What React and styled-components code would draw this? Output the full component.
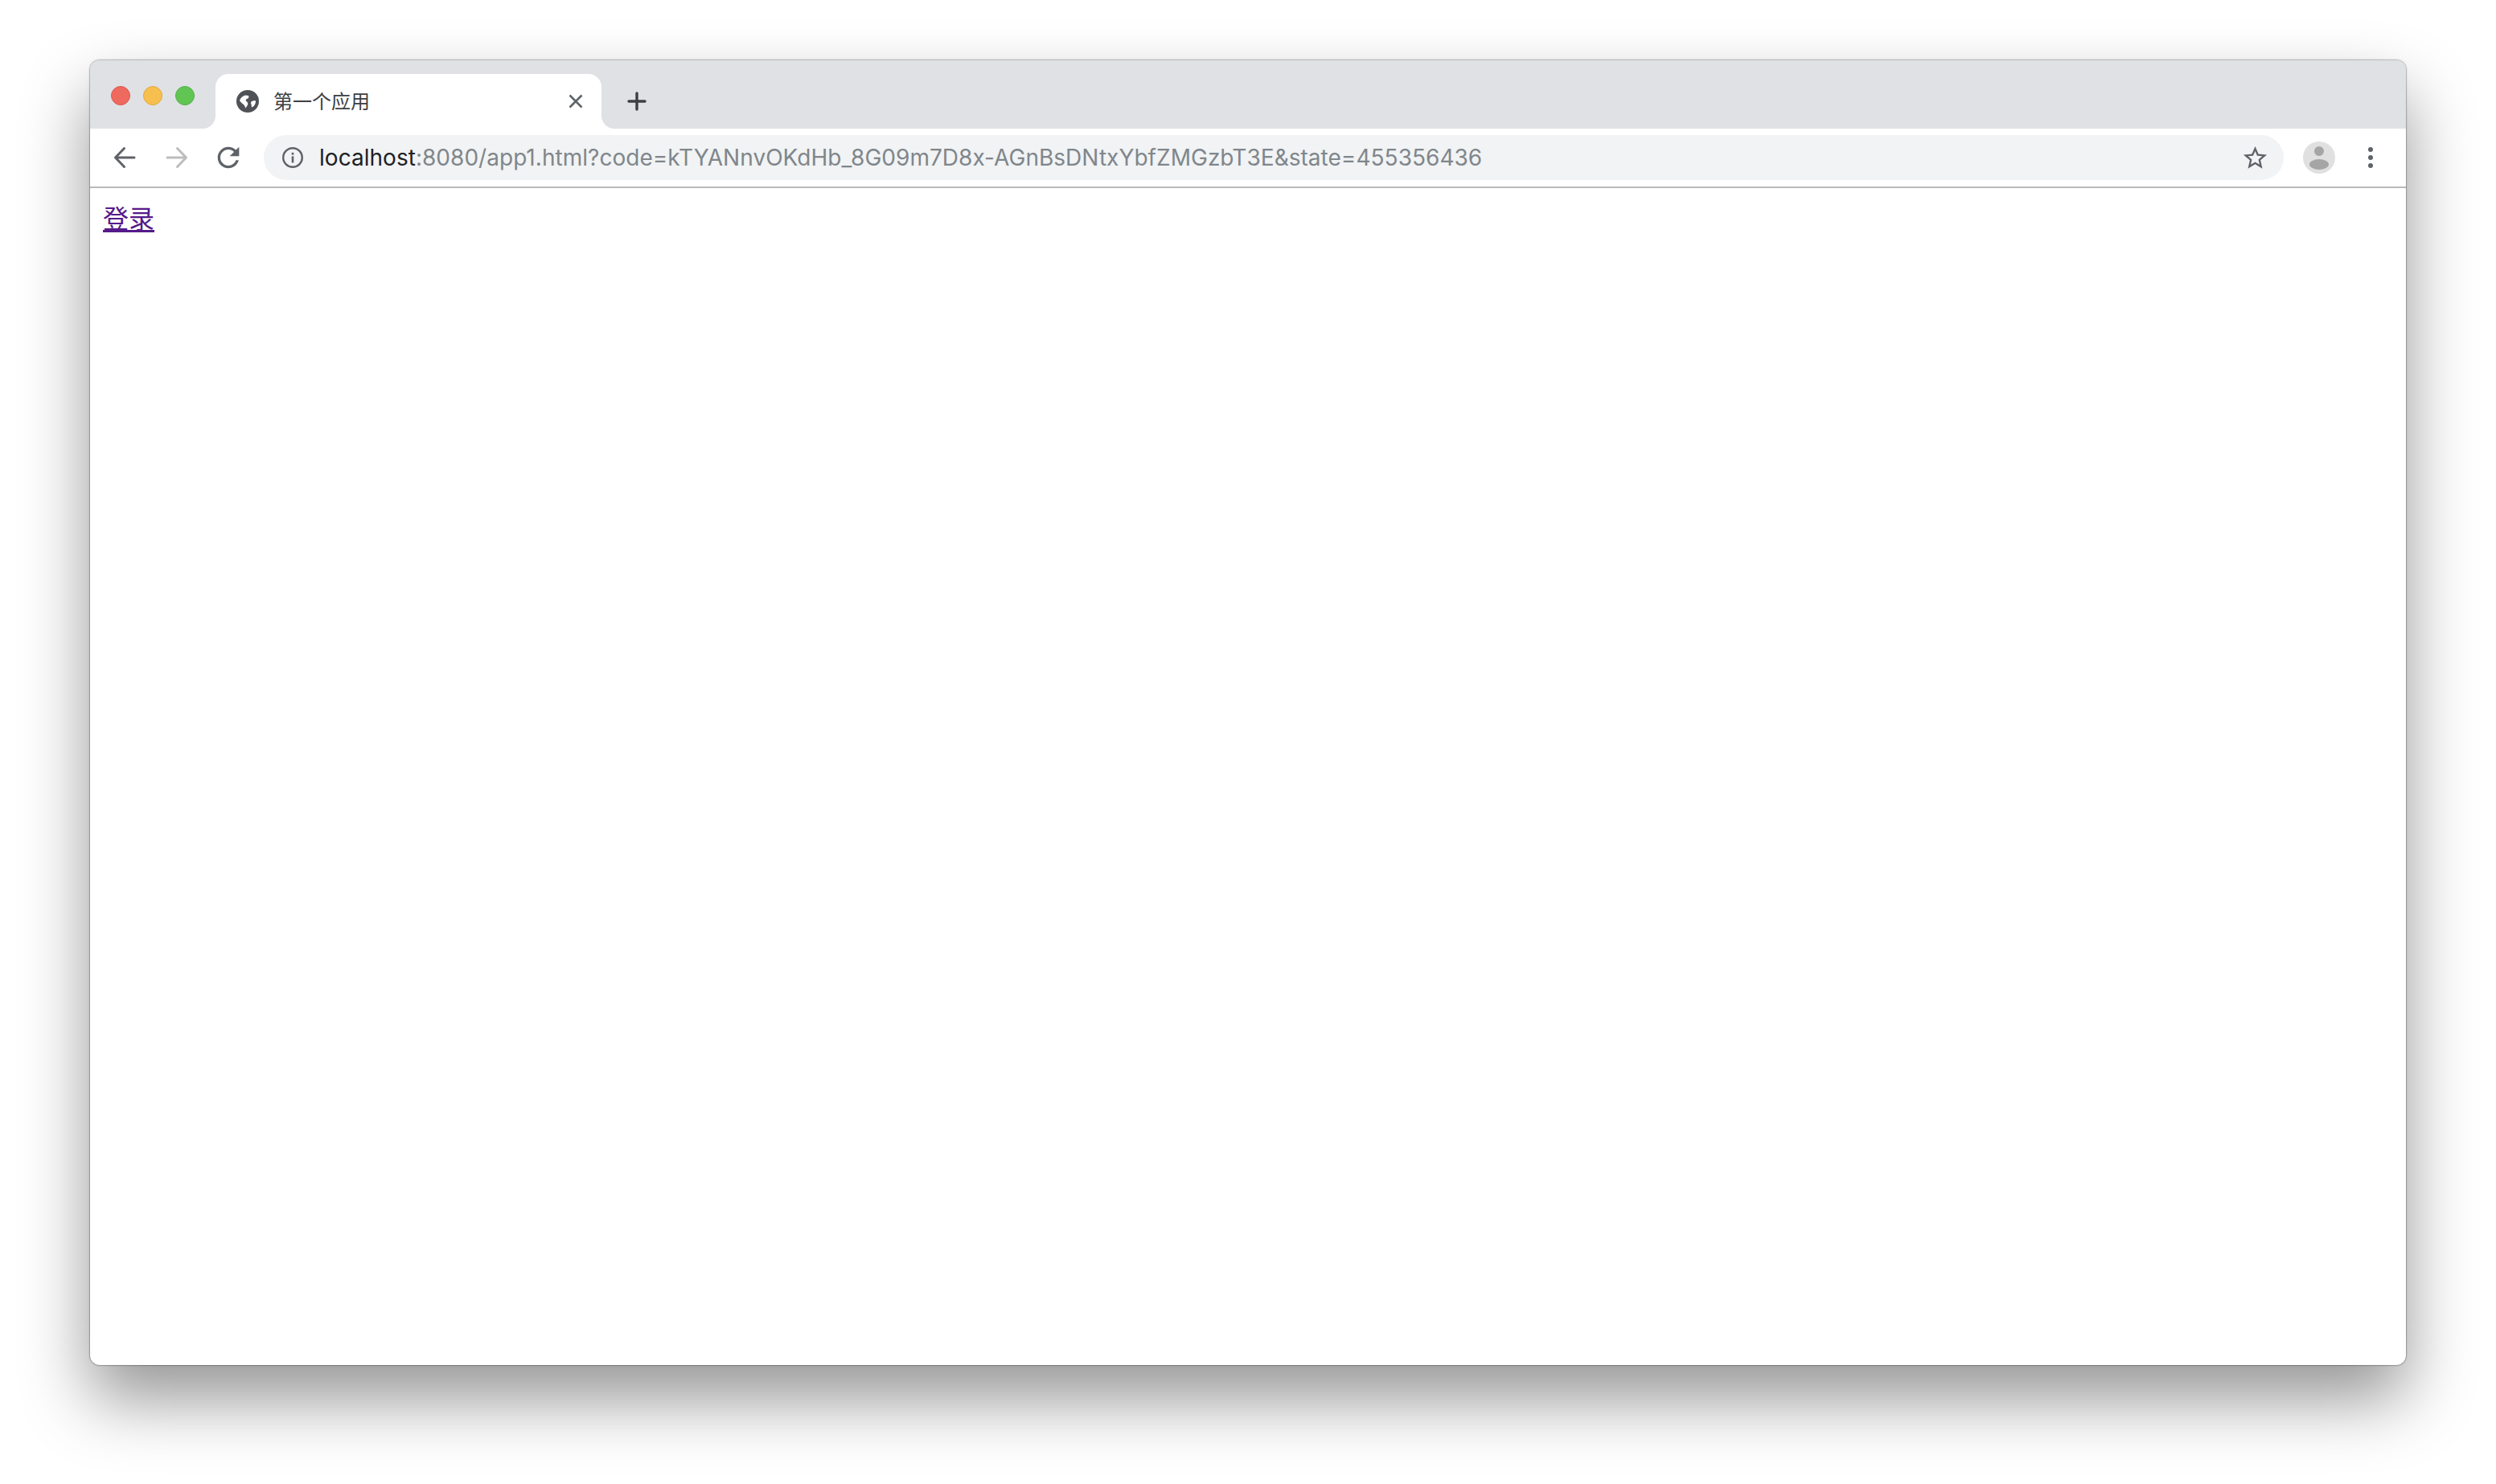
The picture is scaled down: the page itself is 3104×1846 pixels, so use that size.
import React from 'react';
import styled, { createGlobalStyle } from 'styled-components';

const GlobalStyle = createGlobalStyle`
    html, body {
        margin: 0;
        background: #fff;
    }
    body {
        font-family: Inter, "Noto Sans CJK SC", sans-serif;
    }
`;

const Page = styled.div`
    width: 3104px;
    height: 1846px;
    box-sizing: border-box;
    padding: 75px 112px 148px 112px;
    overflow: hidden;
`;

const Window = styled.div`
    height: 100%;
    display: flex;
    flex-direction: column;
    background: #fff;
    border-radius: 12px;
    box-shadow: 0 0 0 1px rgba(0,0,0,0.14), 0 0 3px rgba(0,0,0,0.3), 0 42px 84px rgba(0,0,0,0.42);
`;

const TitleBar = styled.div`
    height: 85px;
    box-sizing: border-box;
    flex-shrink: 0;
    display: flex;
    align-items: flex-end;
    padding-left: 26px;
    background: #dfe1e5;
    border-radius: 12px 12px 0 0;
`;

const Lights = styled.div`
    display: flex;
    gap: 16px;
    align-self: flex-start;
    margin-top: 32px;
`;

const Light = styled.span`
    width: 24px;
    height: 24px;
    box-sizing: border-box;
    border-radius: 50%;
    background: ${props => props.color};
    border: 1px solid ${props => props.edge};
`;

const Tab = styled.div`
    position: relative;
    width: 480px;
    height: 68px;
    box-sizing: border-box;
    margin-left: 26px;
    padding: 0 22px 0 26px;
    display: flex;
    align-items: center;
    background: #fff;
    border-radius: 16px 16px 0 0;

    &::before, &::after {
        content: '';
        position: absolute;
        bottom: 0;
        width: 16px;
        height: 16px;
    }
    &::before {
        left: -16px;
        background: radial-gradient(circle at 0 0, #dfe1e5 15.5px, #fff 16.5px);
    }
    &::after {
        right: -16px;
        background: radial-gradient(circle at 100% 0, #dfe1e5 15.5px, #fff 16.5px);
    }
`;

const TabTitle = styled.span`
    flex: 1;
    margin-left: 18px;
    padding-bottom: 3px;
    font-family: "Noto Sans CJK SC", sans-serif;
    font-size: 24px;
    line-height: 32px;
    color: #3c4043;
`;

const NewTab = styled.div`
    margin: 0 0 22px 32px;
    width: 24px;
    height: 24px;
    display: flex;
`;

const Toolbar = styled.div`
    height: 74px;
    box-sizing: border-box;
    flex-shrink: 0;
    display: flex;
    align-items: center;
    padding: 0 12px 0 11px;
    background: #fff;
    border-bottom: 2px solid #b9b9b9;
`;

const ToolButton = styled.div`
    width: ${props => props.wide || 64}px;
    height: 48px;
    flex-shrink: 0;
    display: flex;
    align-items: center;
    justify-content: center;
`;

const AddressBar = styled.div`
    flex: 1;
    height: 56px;
    margin: 0 12px;
    padding: 0 18px 0 22px;
    display: flex;
    align-items: center;
    background: #f1f3f4;
    border-radius: 28px;
`;

const Url = styled.div`
    flex: 1;
    margin-left: 19px;
    font-size: 28px;
    line-height: 36px;
    letter-spacing: 0.03px;
    color: #80868b;
    white-space: nowrap;
`;

const Host = styled.span`
    color: #202124;
`;

const Content = styled.div`
    flex: 1;
    padding: 18px 16px 16px;
`;

const LoginLink = styled.a`
    font-family: "Noto Sans CJK SC", sans-serif;
    font-size: 32px;
    line-height: 37px;
    color: #551a8b;
    text-decoration: underline;
    text-decoration-thickness: 3px;
`;

const GlobeIcon = () => (
    <svg width="28" height="28" viewBox="0 0 28 28" style={{ flexShrink: 0 }}>
        <circle cx="14" cy="14" r="14" fill="#4f5257" />
        <path fill="#fff" d="M4 13C5 10 7.5 7.5 11 6.5L15 7C16 8.5 15 10.5 13 11 11.5 11.5 11 13 13 14.5 15 16 14.5 18.5 13 20L11.5 22.5C11 21 10 19.5 9 18 7.5 17 5.5 15.5 4 13Z" />
        <path fill="#fff" d="M18.5 14.5C20 13.5 22.5 13 24 13.5 24 17 22.5 20 19.5 21.5 18.5 20.5 18.5 19.5 18.8 18.5 18.2 17 17.5 15.5 18.5 14.5Z" />
    </svg>
);

const CloseIcon = () => (
    <svg width="20" height="20" viewBox="0 0 20 20" stroke="#5f6368" strokeWidth="2.6">
        <path d="M2.5 2.5 17.5 17.5M17.5 2.5 2.5 17.5" />
    </svg>
);

const PlusIcon = () => (
    <svg width="24" height="24" viewBox="0 0 24 24" stroke="#3c4043" strokeWidth="3.4" strokeLinecap="round">
        <path d="M12 2v20M2 12h20" />
    </svg>
);

const ArrowIcon = ({ color, flip }) => (
    <svg width="30" height="30" viewBox="0 0 30 30" fill="none" stroke={color} strokeWidth="3" strokeLinecap="round" strokeLinejoin="round" style={{ transform: flip ? 'scaleX(-1)' : 'none' }}>
        <path d="M27 15H3.5M14.5 3.5 3.5 15l11 11.5" />
    </svg>
);

const ReloadIcon = () => (
    <svg width="40" height="40" viewBox="0 0 24 24" fill="#5f6368">
        <path d="M17.65 6.35C16.2 4.9 14.21 4 12 4c-4.42 0-7.99 3.58-7.99 8s3.57 8 7.99 8c3.73 0 6.84-2.55 7.73-6h-2.08c-.82 2.33-3.04 4-5.65 4-3.31 0-6-2.69-6-6s2.69-6 6-6c1.66 0 3.14.69 4.22 1.78L13 11h7V4l-2.35 2.35z" />
    </svg>
);

const InfoIcon = () => (
    <svg width="28" height="28" viewBox="0 0 28 28" fill="none" style={{ flexShrink: 0 }}>
        <circle cx="14" cy="14" r="11.8" stroke="#5f6368" strokeWidth="2.4" />
        <rect x="12.7" y="12.4" width="2.6" height="8" fill="#5f6368" />
        <rect x="12.7" y="7.8" width="2.6" height="2.8" fill="#5f6368" />
    </svg>
);

const StarIcon = () => (
    <svg width="35" height="35" viewBox="0 0 24 24" fill="#5f6368" style={{ flexShrink: 0 }}>
        <path d="M22 9.24l-7.19-.62L12 2 9.19 8.63 2 9.24l5.46 4.73L5.82 21 12 17.27 18.18 21l-1.63-7.03L22 9.24zM12 15.4l-3.76 2.27 1-4.28-3.32-2.88 4.38-.38L12 6.1l1.71 4.04 4.38.38-3.32 2.88 1 4.28L12 15.4z" />
    </svg>
);

const AvatarIcon = () => (
    <svg width="40" height="40" viewBox="0 0 40 40">
        <circle cx="20" cy="20" r="20" fill="#e0e0e0" />
        <circle cx="20" cy="12" r="6" fill="#a5a5a5" />
        <ellipse cx="20" cy="28.5" rx="12" ry="6.5" fill="#a5a5a5" />
    </svg>
);

const MenuIcon = () => (
    <svg width="8" height="28" viewBox="0 0 8 28" fill="#5f6368">
        <circle cx="4" cy="4" r="3" />
        <circle cx="4" cy="14" r="3" />
        <circle cx="4" cy="24" r="3" />
    </svg>
);

const App = () => (
    <Page>
        <GlobalStyle />
        <Window>
            <TitleBar>
                <Lights>
                    <Light color="#ee6a5f" edge="#e0554b" />
                    <Light color="#f6bf4f" edge="#e4a93c" />
                    <Light color="#61c554" edge="#52b046" />
                </Lights>
                <Tab>
                    <GlobeIcon />
                    <TabTitle>第一个应用</TabTitle>
                    <CloseIcon />
                </Tab>
                <NewTab><PlusIcon /></NewTab>
            </TitleBar>
            <Toolbar>
                <ToolButton><ArrowIcon color="#5f6368" /></ToolButton>
                <ToolButton wide={65}><ArrowIcon color="#bdbdbd" flip /></ToolButton>
                <ToolButton><ReloadIcon /></ToolButton>
                <AddressBar>
                    <InfoIcon />
                    <Url><Host>localhost</Host>:8080/app1.html?code=kTYANnvOKdHb_8G09m7D8x-AGnBsDNtxYbfZMGzbT3E&amp;state=455356436</Url>
                    <StarIcon />
                </AddressBar>
                <ToolButton><AvatarIcon /></ToolButton>
                <ToolButton><MenuIcon /></ToolButton>
            </Toolbar>
            <Content>
                <LoginLink href="#">登录</LoginLink>
            </Content>
        </Window>
    </Page>
);

export default App;
